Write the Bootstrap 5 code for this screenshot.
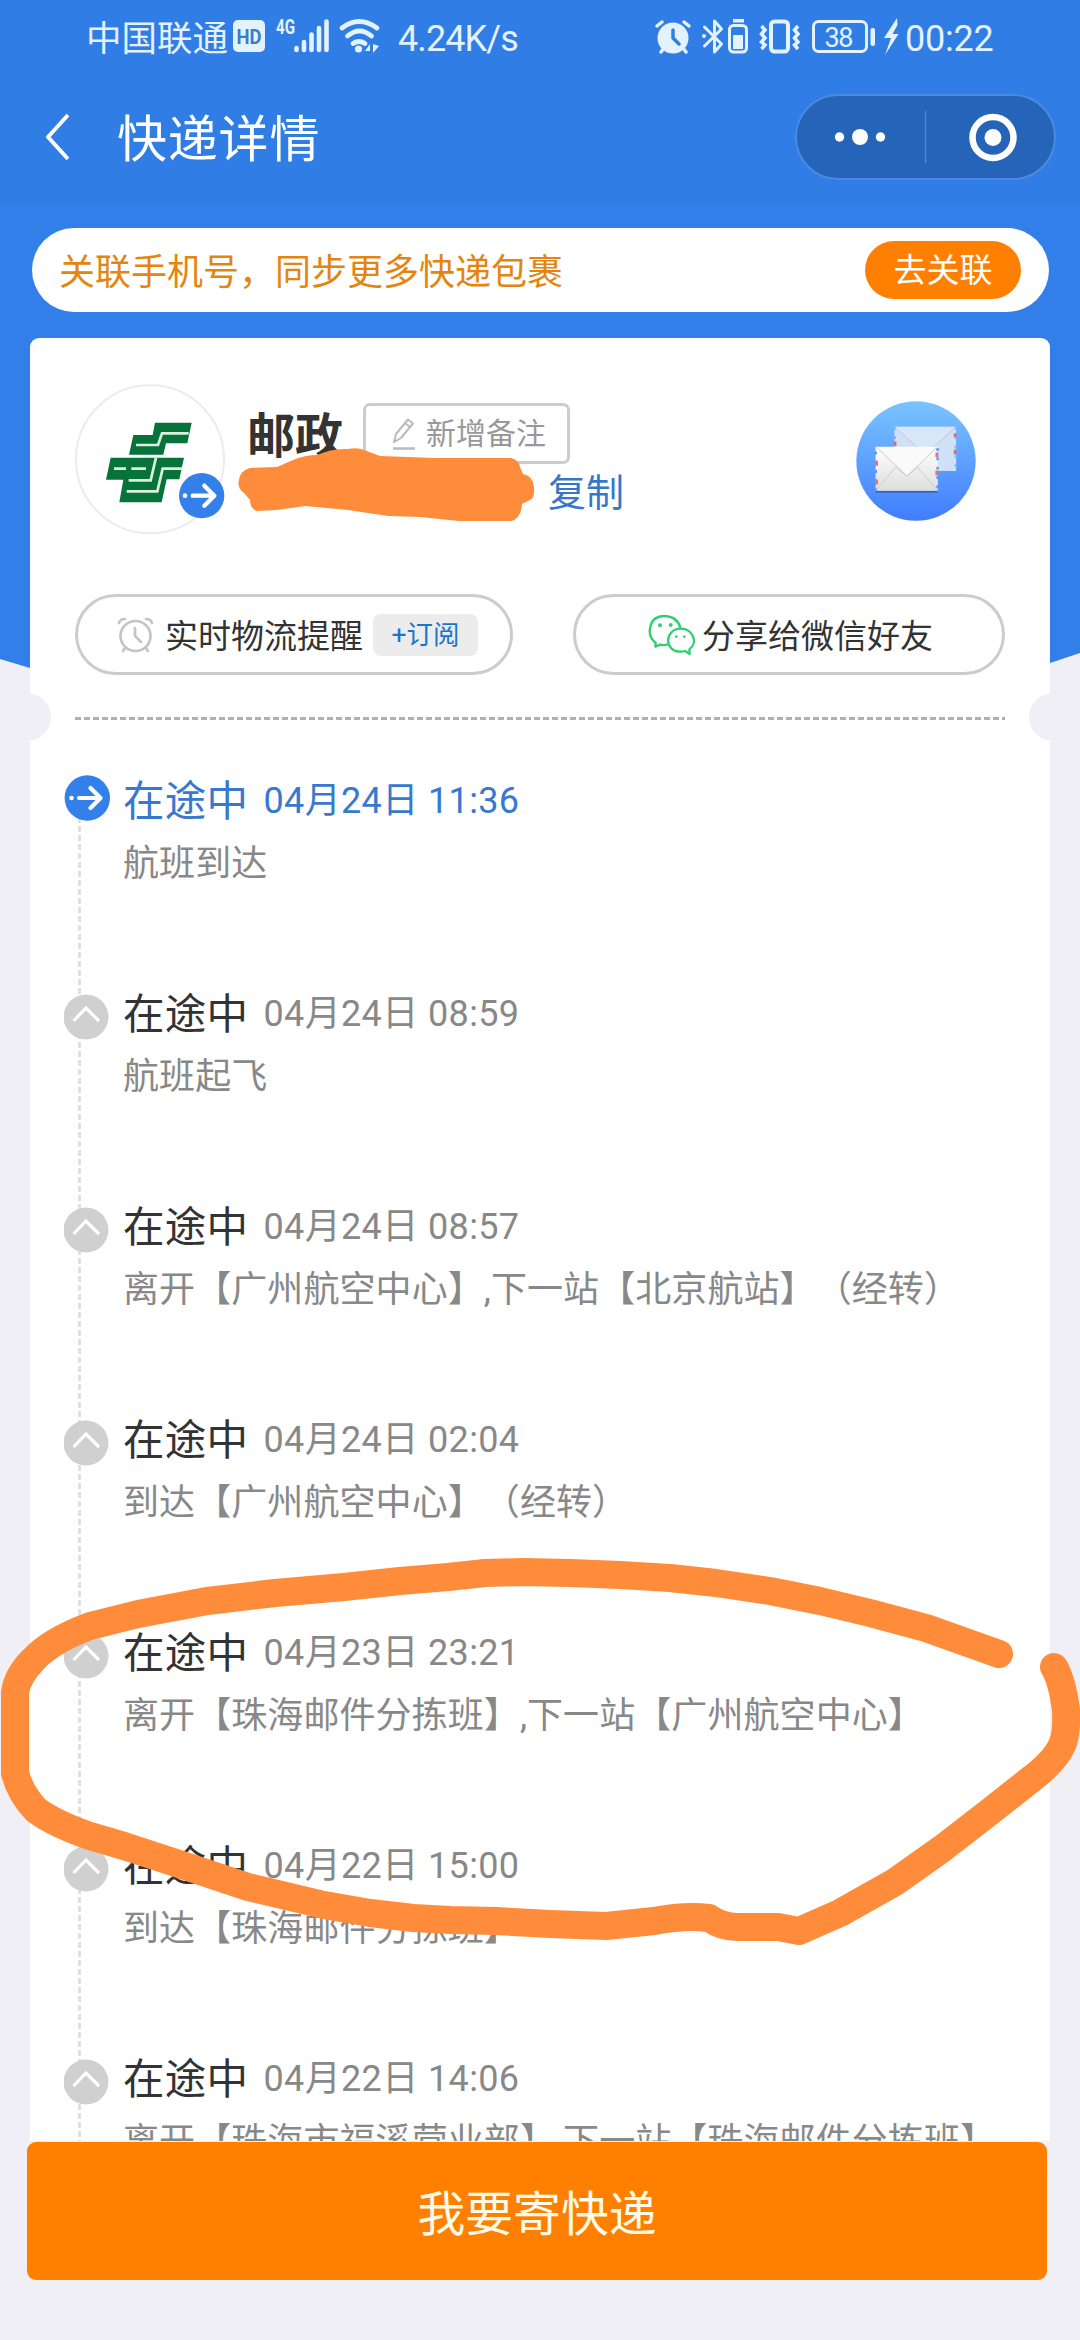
<!DOCTYPE html>
<html lang="zh-CN">
<head>
<meta charset="utf-8">
<meta name="viewport" content="width=device-width, initial-scale=1">
<title>快递详情</title>
<link href="https://cdn.jsdelivr.net/npm/bootstrap@5.3.0/dist/css/bootstrap.min.css" rel="stylesheet">
<style>
  body{width:1080px;height:2340px;overflow:hidden;background:#efeff5;color:#333;font-family:Roboto,"Noto Sans CJK SC",sans-serif;line-height:1;font-size:36px;text-spacing-trim:space-all;font-kerning:none}
  svg{display:block;flex:none}
  .phone{width:1080px;height:2340px;overflow:hidden}
  .backdrop-blue{width:1080px;height:680px;background:linear-gradient(#307de6 0 201px,#337fea 205px);clip-path:polygon(0 0,100% 0,100% 653px,1050px 663px,1000px 675px,80px 680px,30px 668px,0 659px)}
  .status{height:73px;color:#e3f2ff;padding-left:86px}
  .status span{line-height:40px;white-space:nowrap}
  .navline{height:128px;padding:21px 24px 0 45px}
  .page-title{font-size:50px;line-height:86px;margin-left:48px;padding-top:3px;letter-spacing:.8px;color:#fff}
  .capsule{width:261px;height:86px;border:2px solid #4a8ae0;background:#2664b9}
  .bind-bar{height:84px;margin:27px 31px 0 32px;padding:0 28px 0 27px;color:#e3850f}
  .bind-btn{width:156px;height:58px;font-size:33px;background:#ff8000;line-height:56px;padding:2px 0 0;border:0;color:#fff;border-radius:29px}
  .sheet{margin:26px 30px 0;border-radius:9px;height:1900px;background:#fff}
  .sender{height:256px;padding:46px 45px 0}
  .brand{font-size:48px;font-weight:700;line-height:60px}
  .note-btn{width:207px;height:61px;border:3px solid #ccc;border-radius:7px;color:#999;font-size:30px;margin-left:20px}
  .copy{font-size:38px;color:#3777c9;line-height:44px;margin-left:301px}
  .pill{height:81px;border:3px solid #ccc;border-radius:41px;font-size:33px;background:#fff}
  .pill-label{padding-top:3px}
  .tag{width:105px;height:42px;border-radius:8px;background:#ececec;color:#1677cc;font-size:26.5px}
  .tear{height:3px;margin:42px 45px 0;background:repeating-linear-gradient(90deg,#b0b0b0 0 6px,transparent 6px 9px)}
  .notch{width:48px;height:48px;top:355px;background:#efeff5}
  .track{margin-top:55px;padding-left:34px}
  .thread{left:48px;top:42px;width:3px;height:1340px;background:repeating-linear-gradient(#e0e0e0 0 6px,transparent 6px 9px)}
  .stop{height:213px}
  .stop-icon{width:45px;margin-right:14px}
  .state{font-size:41.5px;line-height:51px;letter-spacing:.3px;padding-top:1px}
  .when{color:#888;margin-left:15px;line-height:51px;letter-spacing:.38px;padding-top:1px}
  .detail{color:#888;line-height:44px;margin-top:15px;white-space:nowrap;letter-spacing:.08px}
  .now .state,.now .when{color:#3878cf}
  .foot{height:199px;background:#efeff5;padding:0 33px 0 27px}
  .send-btn{height:138px;border-radius:9px;background:#ff8000;color:#fffbe8;font-size:47.8px;border:0;padding:10px 0 0;line-height:1.2}
</style>
</head>
<body>
<div class="phone position-relative">
  <div class="backdrop-blue position-absolute top-0 start-0"></div>
  <div class="position-relative">
    <header>
      <div class="status d-flex">
        <span style="margin-top:19px;font-size:35.5px;width:142px">中国联通</span>
        <svg width="160" height="73" viewBox="229 0 160 73" fill="#e3f2ff">
          <rect x="234" y="20" width="32" height="32" rx="5"/>
          <text x="250" y="44" font-size="21" font-weight="700" text-anchor="middle" fill="#3d7cc4" textLength="25" lengthAdjust="spacingAndGlyphs">HD</text>
          <text x="277" y="34" font-size="20" font-weight="700" textLength="19" lengthAdjust="spacingAndGlyphs">4G</text>
          <g stroke="#e3f2ff" stroke-width="4.6" stroke-linecap="round"><path d="M297.5 48v2M305 42v8M312.500 34.500V50M320 28v22M327.500 21.500V50"/></g>
          <g fill="none" stroke="#e3f2ff" stroke-width="4.800" stroke-linecap="round"><path d="M343 28q17-13 35 0M348.500 36q12-10 24 0M354 43.500q6-4 12 0"/></g>
          <circle cx="359.500" cy="49" r="3.600"/><path d="M371 44v7h-5zM374 44v9l6-7z"/>
        </svg>
        <span style="margin-top:19px;margin-left:10px;letter-spacing:-.9px;width:121px">4.24K/s</span>
        <svg width="252" height="73" viewBox="652 0 252 73" fill="#e3f2ff" style="margin-left:133px">
          <circle cx="673" cy="38" r="15.500"/><path d="M657 26l5-4M689 26l-5-4M661 52l3-4M686 52l-3-4" stroke="#e3f2ff" stroke-width="3.500" stroke-linecap="round"/>
          <path d="M673 30v8l6 6" fill="none" stroke="#307de6" stroke-width="3.500" stroke-linecap="round"/>
          <path d="M704.500 27l17 17-7 8V21l7 8-17 17" fill="none" stroke="#e3f2ff" stroke-width="3" stroke-linejoin="round" stroke-linecap="round"/>
          <circle cx="704" cy="36" r="2"/>
          <rect x="729.500" y="25.500" width="17" height="26.500" rx="4" fill="none" stroke="#e3f2ff" stroke-width="3"/><path d="M733 19h11v3.500h-11zM733 35h10v14h-10z"/>
          <rect x="771" y="21.500" width="17" height="30" rx="3.500" fill="none" stroke="#e3f2ff" stroke-width="4"/>
          <path d="M761.500 26l3.500 4-3.500 4 3.500 4-3.500 4 3.500 3-3.500 4M798 26l-3.500 4 3.500 4-3.500 4 3.500 4-3.500 3 3.500 4" fill="none" stroke="#e3f2ff" stroke-width="3.500"/>
          <rect x="813.500" y="21.500" width="53" height="30" rx="5" fill="none" stroke="#e3f2ff" stroke-width="3"/><rect x="870.500" y="28" width="4.500" height="18" rx="2"/>
          <text x="839" y="46.500" font-size="27" text-anchor="middle" textLength="29">38</text>
          <path d="M897 18l-13 20h7l-6 17 13.500-21h-6l5-9z"/>
        </svg>
        <span style="margin-top:19px;margin-left:1px;letter-spacing:-.2px">00:22</span>
      </div>
      <div class="navline d-flex">
        <svg width="24" height="86" viewBox="0 0 24 86" fill="none" stroke="#fff" stroke-width="4"><path d="M23 21L3 43l20 22" stroke-linejoin="round"/></svg>
        <h1 class="page-title fw-normal mb-0">快递详情</h1>
        <div class="capsule rounded-pill ms-auto">
          <svg width="257" height="82" viewBox="797 96 257 82" fill="#fff"><circle cx="839.500" cy="137" r="4.700"/><circle cx="860" cy="137" r="8"/><circle cx="880.500" cy="137" r="4.700"/><path d="M925.500 111v52" stroke="#4a86d8" stroke-width="1.500"/><circle cx="993" cy="137.500" r="20.500" fill="none" stroke="#fff" stroke-width="6.500"/><circle cx="993" cy="137.500" r="8.500"/></svg>
        </div>
      </div>
    </header>

    <div class="bind-bar d-flex align-items-center justify-content-between bg-white rounded-pill">
      <span style="padding-top:5px">关联手机号，同步更多快递包裹</span>
      <button class="bind-btn btn">去关联</button>
    </div>

    <main class="sheet position-relative">
      <span class="notch rounded-circle position-absolute" style="left:-27px"></span>
      <span class="notch rounded-circle position-absolute" style="right:-27px"></span>
      <section class="sender d-flex">
        <svg width="150" height="150" viewBox="15 10 450 450">
          <circle cx="240" cy="236" r="222" fill="#fff" stroke="#ececec" stroke-width="6"/>
          <g fill="#07733b"><path d="M255 126H365L352 188H288L280 222H177L190 163H248z"/><path d="M122 231H342L328 296H290L275 365H148L160 297H108z"/></g>
          <g fill="none" stroke="#d9f0df" stroke-width="8"><path d="M198 193H264L276 158H356M132 264H168M184 264H228M176 299H242L258 231M170 332H262L278 264H336"/></g>
          <circle cx="395" cy="345" r="68" fill="#3380ea"/><circle cx="345" cy="345" r="7" fill="#fff"/>
          <path d="M368 345H430M403 315L433 345L403 375" fill="none" stroke="#fff" stroke-width="13" stroke-linecap="round" stroke-linejoin="round"/>
        </svg>
        <div style="margin:19px 0 0 22px">
          <div class="d-flex">
            <div class="brand" style="padding-top:4px;height:61px">邮政</div>
            <div class="note-btn d-flex align-items-center">
              <svg width="25" height="32" viewBox="0 0 25 32" fill="none" stroke="#bbb" stroke-width="2" style="margin-left:25px;margin-right:10px"><path d="M2 30.500h22" stroke-width="2.500"/><path d="M3 24l2-8L17 1.500l5 4L10 20z M14 5l5 4" stroke-linejoin="round"/></svg>
              <span style="padding-top:1px">新增备注</span>
            </div>
          </div>
          <div class="copy" style="margin-top:7px">复制</div>
        </div>
        <svg class="ms-auto" width="120" height="120" viewBox="106 93 362 362" style="margin:17px 29px 0 0">
          <defs>
            <linearGradient id="sky" x2="0" y2="1"><stop stop-color="#7ac4ff"/><stop offset="1" stop-color="#417dff"/></linearGradient>
            <linearGradient id="paper" x2="0" y2="1"><stop stop-color="#fff"/><stop offset="1" stop-color="#dedede"/></linearGradient>
          </defs>
          <circle cx="287" cy="274" r="180" fill="url(#sky)"/>
          <rect x="222" y="171" width="186" height="133" fill="#d0e1f5"/><path d="M222 171L315 255L408 171" fill="#d9e6f7" stroke="#b5cbe4" stroke-width="3"/>
          <path d="M223 171V230M407 171V304" stroke="#7bb6fa" stroke-width="7" stroke-dasharray="9 19"/><path d="M224 215v13M405 190v12M405 240v14" stroke="#d96c78" stroke-width="8"/>
          <path d="M166 367H352" stroke="#3467bb" stroke-width="5"/>
          <rect x="165" y="231" width="188" height="133" fill="url(#paper)"/>
          <path d="M168 361L225 293L260 319L292 293L350 361" fill="none" stroke="#ccc" stroke-width="3"/><path d="M168 233L260 319L350 233" fill="#fafafa" stroke="#ccc" stroke-width="3"/>
          <path d="M166 245V364M352 235V364" stroke="#5798f8" stroke-width="7" stroke-dasharray="9 19"/><path d="M168 273v15M168 330v15M350 248v14M350 303v14" stroke="#df7777" stroke-width="9"/>
        </svg>
      </section>

      <section class="d-flex justify-content-between" style="padding:0 45px">
        <div class="pill d-flex align-items-center" style="width:438px;padding-left:39px">
          <svg width="36" height="36" viewBox="0 0 36 36" fill="none" stroke="#c4c4c4" stroke-width="2.700" stroke-linecap="round"><circle cx="18.500" cy="19" r="15"/><path d="M18 11v8l6 6M2 6q1-4 6-4M35 6q-1-4-6-4M8 31l-2 3M29 31l2 3"/></svg>
          <span class="pill-label" style="margin-left:12px">实时物流提醒</span>
          <span class="tag d-flex align-items-center justify-content-center" style="margin-left:10px"><span style="padding-top:1px">+订阅</span></span>
        </div>
        <div class="pill d-flex align-items-center" style="width:432px;padding-left:72px">
          <svg width="47" height="41" viewBox="262 74 141 123" fill="none" stroke="#31cf73" stroke-width="7" stroke-linejoin="round"><path d="M322 165Q311 169 299 166L284 172L285 160Q267 148 267 126Q269 80 313 80Q352 83 359 116"/><path d="M360 118C312 118 308 187 360 187Q368 187 373 185L387 194L386 180C414 160 396 118 360 118z"/><g fill="#31cf73" stroke="none"><circle cx="298" cy="108" r="6"/><circle cx="330" cy="107" r="6"/><circle cx="347" cy="142" r="4"/><circle cx="371" cy="142" r="4"/></g></svg>
          <span class="pill-label" style="margin-left:7px">分享给微信好友</span>
        </div>
      </section>
      <div class="tear"></div>

      <section class="track position-relative">
        <div class="thread position-absolute"></div>
        <article class="stop now d-flex position-relative">
          <div class="stop-icon"><svg width="46" height="46" viewBox="0 0 46 46"><circle cx="23.300" cy="23" r="22.700" fill="#3380ea"/><circle cx="7.500" cy="23" r="2.300" fill="#fff"/><path d="M15 23h21M26.500 13l10 10-10 10" fill="none" stroke="#fff" stroke-width="4.200" stroke-linecap="round" stroke-linejoin="round"/></svg></div>
          <div><div class="d-flex"><span class="state">在途中</span><span class="when">04月24日 11:36</span></div><div class="detail">航班到达</div></div>
        </article>
        <article class="stop d-flex position-relative">
          <div class="stop-icon"><svg width="45" height="57" viewBox="0 -6 45 57"><circle cx="22" cy="23" r="22.500" fill="#d0d0d0"/><path d="M9.500 27L22 14l13 13" fill="none" stroke="#fff" stroke-width="3.200"/></svg></div>
          <div><div class="d-flex"><span class="state">在途中</span><span class="when">04月24日 08:59</span></div><div class="detail">航班起飞</div></div>
        </article>
        <article class="stop d-flex position-relative">
          <div class="stop-icon"><svg width="45" height="57" viewBox="0 -6 45 57"><circle cx="22" cy="23" r="22.500" fill="#d0d0d0"/><path d="M9.500 27L22 14l13 13" fill="none" stroke="#fff" stroke-width="3.200"/></svg></div>
          <div><div class="d-flex"><span class="state">在途中</span><span class="when">04月24日 08:57</span></div><div class="detail">离开【广州航空中心】,下一站【北京航站】<span>（经转）</span></div></div>
        </article>
        <article class="stop d-flex position-relative">
          <div class="stop-icon"><svg width="45" height="57" viewBox="0 -6 45 57"><circle cx="22" cy="23" r="22.500" fill="#d0d0d0"/><path d="M9.500 27L22 14l13 13" fill="none" stroke="#fff" stroke-width="3.200"/></svg></div>
          <div><div class="d-flex"><span class="state">在途中</span><span class="when">04月24日 02:04</span></div><div class="detail">到达【广州航空中心】<span>（经转）</span></div></div>
        </article>
        <article class="stop d-flex position-relative">
          <div class="stop-icon"><svg width="45" height="57" viewBox="0 -6 45 57"><circle cx="22" cy="23" r="22.500" fill="#d0d0d0"/><path d="M9.500 27L22 14l13 13" fill="none" stroke="#fff" stroke-width="3.200"/></svg></div>
          <div><div class="d-flex"><span class="state">在途中</span><span class="when">04月23日 23:21</span></div><div class="detail">离开【珠海邮件分拣班】,下一站【广州航空中心】</div></div>
        </article>
        <article class="stop d-flex position-relative">
          <div class="stop-icon"><svg width="45" height="57" viewBox="0 -6 45 57"><circle cx="22" cy="23" r="22.500" fill="#d0d0d0"/><path d="M9.500 27L22 14l13 13" fill="none" stroke="#fff" stroke-width="3.200"/></svg></div>
          <div><div class="d-flex"><span class="state">在途中</span><span class="when">04月22日 15:00</span></div><div class="detail">到达【珠海邮件分拣班】</div></div>
        </article>
        <article class="stop d-flex position-relative">
          <div class="stop-icon"><svg width="45" height="57" viewBox="0 -6 45 57"><circle cx="22" cy="23" r="22.500" fill="#d0d0d0"/><path d="M9.500 27L22 14l13 13" fill="none" stroke="#fff" stroke-width="3.200"/></svg></div>
          <div><div class="d-flex"><span class="state">在途中</span><span class="when">04月22日 14:06</span></div><div class="detail">离开【珠海市福溪营业部】,下一站【珠海邮件分拣班】</div></div>
        </article>
      </section>
    </main>
  </div>

  <footer class="foot position-absolute bottom-0 start-0 w-100"><button class="send-btn btn w-100 d-flex align-items-center justify-content-center" style="margin-top:1px">我要寄快递</button></footer>

  <!-- marker strokes over the page -->
  <svg class="position-absolute top-0 start-0 pe-none" width="1080" height="2340" viewBox="0 0 1080 2340">
    <path fill="#ff8c3a" d="M238.500 482Q240 470 250 468L277 467L293 460Q305 455 317 455Q333 448 348 449Q358 447 364 450L380 456L435 458L511 458Q519 460 520 467L523 474Q533 476 534 487Q535 498 530 500L522 504Q521 519 511 521L459 521L420 517L388 516L348 510L305 506L277 510L257 511Q250 509 250 500L244 493Q238 489 238.500 482z"/>
    <path fill="none" stroke="#ff8c3a" stroke-width="28" stroke-linecap="round" stroke-linejoin="round" d="M999 1654L926 1628L870 1613L820 1601L770 1591L716 1583L670 1578L620 1575L570 1573L523 1572L485 1573L448 1577L400 1581L344 1587L275 1593L207 1601L138 1614L90 1626Q50 1641 33 1660Q17 1676 15 1693L15 1773Q20 1793 36 1810Q55 1824 90 1836L124 1846L179 1864L248 1887L324 1905L370 1913L413 1918L450 1920L496 1921L550 1924L606 1926L654 1921Q685 1915 709 1918Q722 1927 737 1927L778 1927L799 1931L840 1913L895 1882L943 1848L992 1810L1030 1780Q1055 1761 1062 1745Q1067 1735 1066 1710Q1062 1680 1054 1667"/>
  </svg>
</div>
<script src="https://cdn.jsdelivr.net/npm/bootstrap@5.3.0/dist/js/bootstrap.bundle.min.js"></script>
</body>
</html>
